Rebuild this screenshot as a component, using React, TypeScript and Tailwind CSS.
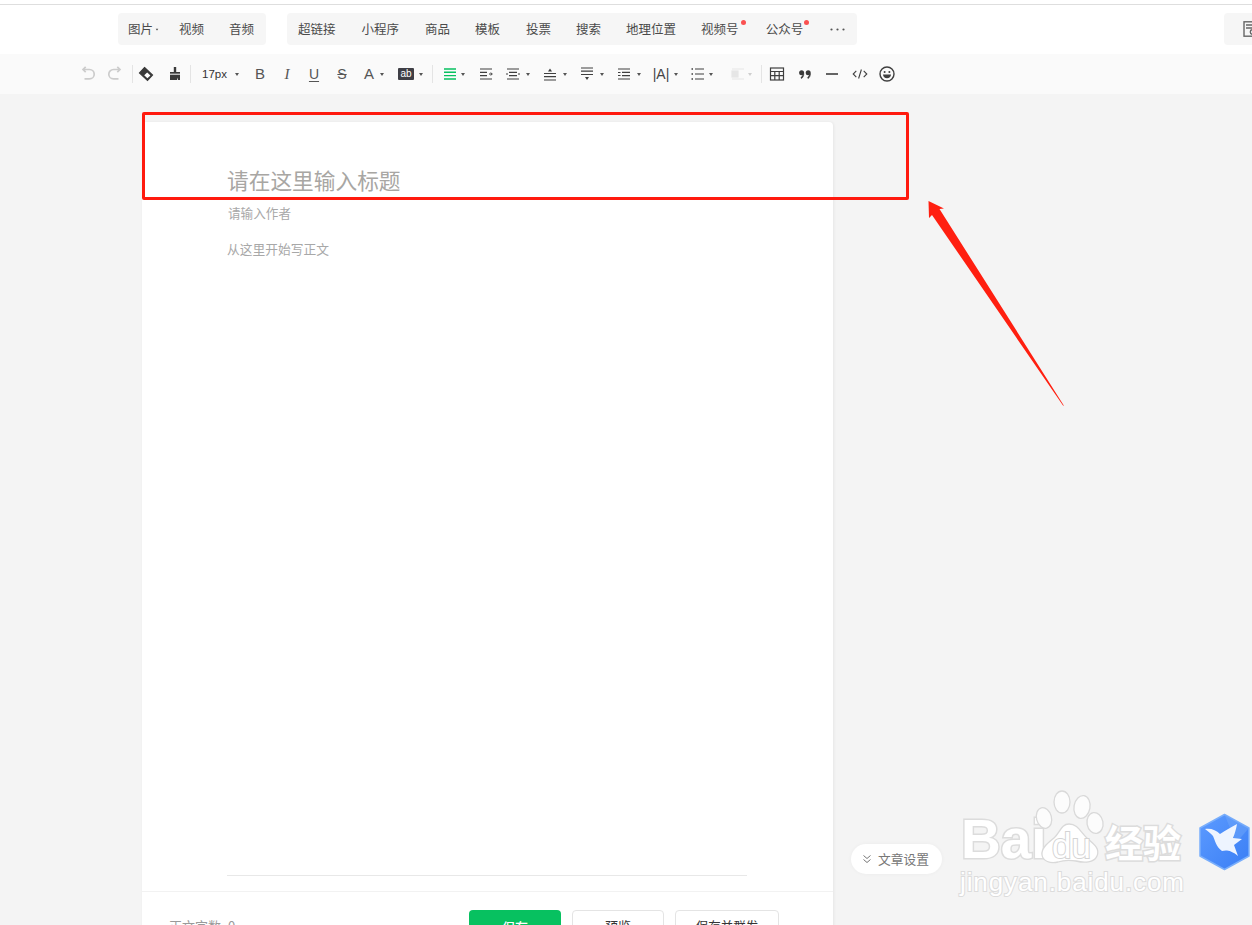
import React from "react";

const Caret = ({ className = "", light = false }: { className?: string; light?: boolean }) => (
  <svg viewBox="0 0 4 3" className={`w-[4px] h-[3px] shrink-0 ${className}`}>
    <path d="M0 0H4L2 3Z" fill={light ? "#cfcfcf" : "#555"} />
  </svg>
);

const Sep = ({ className = "" }: { className?: string }) => (
  <div className={`w-px h-[18px] bg-[#e4e4e4] shrink-0 ${className}`} />
);

const Ic = ({ className = "", children }: { className?: string; children: React.ReactNode }) => (
  <svg viewBox="0 0 16 16" fill="none" stroke="#3f3f3f" strokeWidth="1.2" className={`w-4 h-4 shrink-0 ${className}`}>
    {children}
  </svg>
);

const Glyph = ({ className = "", children }: { className?: string; children: React.ReactNode }) => (
  <span className={`w-4 h-4 shrink-0 flex items-center justify-center text-[14px] leading-4 text-[#555] ${className}`}>{children}</span>
);

const NavItem = ({ className = "", children }: { className?: string; children: React.ReactNode }) => (
  <span className={`relative text-[12.5px] leading-[32px] text-[#4a4a4a] whitespace-nowrap ${className}`}>{children}</span>
);

const Dot = ({ className = "" }: { className?: string }) => (
  <span className={`absolute top-[7px] w-[5px] h-[5px] rounded-full bg-[#fa5151] ${className}`} />
);

export default function App() {
  return (
    <div className="relative w-[1252px] h-[925px] overflow-hidden bg-[#f4f4f4] font-['Noto_Sans_CJK_SC','Liberation_Sans',sans-serif]">
      <div className="h-[5px] bg-white border-b border-[#dedede]" />

      <nav className="h-[49px] bg-white flex items-start pt-2 pl-[118px]">
        <div className="w-[148px] h-8 bg-[#f6f6f6] rounded-sm flex items-center pl-[10px]">
          <NavItem>图片</NavItem>
          <Caret className="ml-[2px] scale-75" />
          <NavItem className="ml-[20px]">视频</NavItem>
          <NavItem className="ml-[25px]">音频</NavItem>
        </div>
        <div className="ml-[21px] w-[570px] h-8 bg-[#f6f6f6] rounded-sm flex items-center pl-[11px]">
          <NavItem>超链接</NavItem>
          <NavItem className="ml-[26px]">小程序</NavItem>
          <NavItem className="ml-[26px]">商品</NavItem>
          <NavItem className="ml-[25px]">模板</NavItem>
          <NavItem className="ml-[26px]">投票</NavItem>
          <NavItem className="ml-[25px]">搜索</NavItem>
          <NavItem className="ml-[25px]">地理位置</NavItem>
          <NavItem className="ml-[25px]">
            视频号
            <Dot className="right-[-7px]" />
          </NavItem>
          <NavItem className="ml-[27px]">
            公众号
            <Dot className="right-[-6px]" />
          </NavItem>
          <svg viewBox="0 0 15 3" className="w-[15px] h-[3px] ml-[27px]">
            <circle cx="1.5" cy="1.5" r="1.1" fill="#555" />
            <circle cx="7.5" cy="1.5" r="1.1" fill="#555" />
            <circle cx="13.5" cy="1.5" r="1.1" fill="#555" />
          </svg>
        </div>
        <div className="ml-auto w-[28px] h-8 bg-[#f6f6f6] rounded-l-sm flex items-center pl-[19px] overflow-hidden">
          <svg viewBox="0 0 16 16" fill="none" stroke="#666" strokeWidth="1.4" className="w-4 h-4 shrink-0">
            <rect x="1" y="0.8" width="13" height="14.4" />
            <path d="M3 4H12M3 7H9" />
            <circle cx="9.5" cy="11" r="2.2" />
          </svg>
        </div>
      </nav>

      <div className="h-10 bg-[#fafafa] flex items-center pl-[80px]">
        <Ic className="[&_*]:stroke-[#cccccc]">
          <path d="M3 3.5H9.5a4.7 4.7 0 0 1 0 9.4H4.5M5.7 0.8L3 3.5L5.7 6.2" strokeWidth="1.7" />
        </Ic>
        <Ic className="ml-[11px] [&_*]:stroke-[#cccccc]">
          <path d="M13 3.5H6.5a4.7 4.7 0 0 0 0 9.4h5M10.3 0.8L13 3.5L10.3 6.2" strokeWidth="1.7" />
        </Ic>
        <Sep className="ml-[9px]" />
        <Ic className="ml-[5px]">
          <path d="M6.5 1.5L14.5 9L9.5 14.5L1.5 7Z" fill="#3a3a3a" stroke="#3a3a3a" />
          <path d="M6.2 9.2L9.2 6.6L12.4 9.4L9.4 12.2Z" fill="#fff" stroke="none" />
        </Ic>
        <Ic className="ml-[13px]">
          <path d="M6.8 1H9.2V6H13V14H11V11.5L10 14H3V6H6.8Z" fill="#3a3a3a" stroke="none" />
          <path d="M3 8.2H13" stroke="#fafafa" strokeWidth="1" />
        </Ic>
        <Sep className="ml-[7px]" />
        <span className="ml-[11px] w-[26px] text-[11.5px] leading-4 text-[#333] font-['Liberation_Sans',sans-serif] whitespace-nowrap">17px</span>
        <Caret className="ml-[7px]" />
        <Glyph className="ml-[13px] font-['Liberation_Sans',sans-serif] text-[15px]">B</Glyph>
        <Glyph className="ml-[11px] font-['Liberation_Serif',serif] italic text-[15px]">I</Glyph>
        <Glyph className="ml-[11px] font-['Liberation_Sans',sans-serif] underline underline-offset-2">U</Glyph>
        <Glyph className="ml-[12px] font-['Liberation_Sans',sans-serif] line-through">S</Glyph>
        <Glyph className="ml-[11px] font-['Liberation_Sans',sans-serif] text-[15px]">A</Glyph>
        <Caret className="ml-[3px]" />
        <span className="ml-[14px] w-4 h-[12px] bg-[#3f3f46] rounded-[1px] text-white text-[10px] leading-[12px] text-center font-['Liberation_Sans',sans-serif]">ab</span>
        <Caret className="ml-[5px]" />
        <Sep className="ml-[9px]" />
        <Ic className="ml-[9px] [&_*]:stroke-[#07c160]">
          <path d="M2 3H14M2 6.3H14M2 9.6H14M2 13H14" strokeWidth="1.4" />
        </Ic>
        <Caret className="ml-[3px]" />
        <Ic className="ml-[13px]">
          <path d="M2 3H14M2 6.3H9M2 9.6H9M2 13H14" />
          <path d="M11 8H14M12.8 6.5L14.3 8L12.8 9.5" strokeWidth="1" />
        </Ic>
        <Ic className="ml-[11px]">
          <path d="M2 3H14M4 6.3H12M4 9.6H12M2 13H14" />
          <path d="M1 8H3M13 8H15" strokeWidth="1" />
        </Ic>
        <Caret className="ml-[5px]" />
        <Ic className="ml-[12px]">
          <path d="M2 7.5H14M2 10.7H14M2 14H14" />
          <path d="M8 2.5L10 5.5H6Z" fill="#3f3f3f" stroke="none" />
        </Ic>
        <Caret className="ml-[5px]" />
        <Ic className="ml-[12px]">
          <path d="M2 2H14M2 5.2H14M2 8.5H14" />
          <path d="M8 14L6 11H10Z" fill="#3f3f3f" stroke="none" />
        </Ic>
        <Caret className="ml-[5px]" />
        <Ic className="ml-[12px]">
          <path d="M2 3H14M6 6.3H14M6 9.6H14M2 13H14" />
          <path d="M2 6.5H4.5M2 9.5H4.5" strokeWidth="1" />
        </Ic>
        <Caret className="ml-[5px]" />
        <span className="ml-[12px] w-4 h-4 shrink-0 flex items-center justify-center text-[14px] leading-4 text-[#444] font-['Liberation_Sans',sans-serif] whitespace-nowrap">|A|</span>
        <Caret className="ml-[5px]" />
        <Ic className="ml-[12px]">
          <path d="M5 3H14M5 8H14M5 13H14" />
          <path d="M1.5 3H3M1.5 8H3M1.5 13H3" strokeWidth="1.6" />
        </Ic>
        <Caret className="ml-[3px]" />
        <Ic className="ml-[17px] [&_*]:stroke-[#e6e6e6]">
          <path d="M2 3H14M2 13H14" />
          <rect x="2" y="5" width="6" height="6" fill="#e6e6e6" />
        </Ic>
        <Caret light className="ml-[2px]" />
        <Sep className="ml-[9px]" />
        <Ic className="ml-[7px]">
          <rect x="1.5" y="2" width="13" height="12" />
          <path d="M1.5 5.5H14.5M1.5 9.7H14.5M5.8 5.5V14M10.2 5.5V14" />
        </Ic>
        <Ic className="ml-[12px]">
          <circle cx="4.6" cy="6.8" r="2.5" fill="#3a3a3a" stroke="none" />
          <circle cx="11.2" cy="6.8" r="2.5" fill="#3a3a3a" stroke="none" />
          <path d="M6.8 7.5C6.8 10 6 11.6 4.4 12.5L3.8 11.6M13.4 7.5C13.4 10 12.6 11.6 11 12.5L10.4 11.6" fill="#3a3a3a" stroke="#3a3a3a" strokeWidth="0.6" />
        </Ic>
        <Ic className="ml-[11px]">
          <path d="M2 8H14" strokeWidth="1.6" />
        </Ic>
        <Ic className="ml-[12px]">
          <path d="M4.3 4.8L1.2 8L4.3 11.2M11.7 4.8L14.8 8L11.7 11.2M9.4 3.5L6.6 12.5" strokeWidth="1.1" />
        </Ic>
        <Ic className="ml-[11px]">
          <circle cx="8" cy="8" r="7" strokeWidth="1.4" />
          <circle cx="5.6" cy="6" r="1" fill="#3f3f3f" stroke="none" />
          <circle cx="10.4" cy="6" r="1" fill="#3f3f3f" stroke="none" />
          <path d="M4 8.6H12C12 11 10.2 12.3 8 12.3S4 11 4 8.6Z" fill="#3f3f3f" stroke="none" />
        </Ic>
      </div>

      <main className="ml-[142px] mt-[28px] w-[691px] h-[831px] bg-white rounded-t-sm shadow-[1px_0_3px_rgba(0,0,0,0.06)] flex flex-col">
        <div className="h-[769px] pl-[85px] pt-[43px] flex flex-col">
          <h1 className="text-[21.7px] leading-[30px] font-normal text-[#a8a6a3] whitespace-nowrap">请在这里输入标题</h1>
          <p className="mt-[8px] pl-px text-[12.6px] leading-5 text-[#a8a8a8]">请输入作者</p>
          <p className="mt-[16px] text-[12.75px] leading-5 text-[#a8a8a8]">从这里开始写正文</p>
          <div className="mt-auto mb-[15px] w-[520px] h-px bg-[#e8e8e8]" />
        </div>
        <footer className="border-t border-[#f2f2f2] flex items-start pl-[27px] pt-[18px]">
          <span className="mt-[6px] w-[300px] text-[13px] leading-5 text-[#9a9a9a] whitespace-nowrap">正文字数<span className="ml-[7px]">0</span></span>
          <button className="w-[92px] h-[32px] bg-[#07c160] rounded-sm text-white text-[13px] leading-[32px] text-center font-medium pt-[1px]">保存</button>
          <button className="ml-[11px] w-[92px] h-[32px] bg-white border border-[#e4e4e4] rounded-sm text-[#353535] text-[13px] text-center">预览</button>
          <button className="ml-[11px] w-[104px] h-[32px] bg-white border border-[#e4e4e4] rounded-sm text-[#353535] text-[12.5px] text-center whitespace-nowrap">保存并群发</button>
        </footer>
      </main>

      {/* floating settings pill */}
      <div className="absolute left-[851px] top-[844px] w-[91px] h-[30px] bg-white rounded-full shadow-[0_0_4px_rgba(0,0,0,0.04)] flex items-center pl-[11px]">
        <svg viewBox="0 0 10 10" fill="none" stroke="#777" strokeWidth="1" className="w-[10px] h-[10px]">
          <path d="M1.5 1.5L5 4.5L8.5 1.5M1.5 5.5L5 8.5L8.5 5.5" />
        </svg>
        <span className="ml-[6px] text-[12.75px] leading-5 text-[#777] whitespace-nowrap">文章设置</span>
      </div>

      {/* annotation */}
      <div className="absolute left-[142px] top-[112px] w-[767px] h-[88px] border-[3px] border-[#ff1a0e] rounded-[2px]" />
      <svg className="absolute left-[920px] top-[195px] w-[150px] h-[215px]" viewBox="0 0 150 215">
        <path d="M8.5 6L24 13.5L19.5 14L143.8 210.5L143.2 210.8L12 20L9 23Z" fill="#ff1f10" />
      </svg>

      {/* watermark */}
      <span className="absolute left-[961px] top-[804px] text-[55px] leading-[70px] font-bold text-white font-['Liberation_Sans',sans-serif] [-webkit-text-stroke:3px_#dcdcdc] [paint-order:stroke_fill]">Bai</span>
      <svg className="absolute left-[1034px] top-[788px] w-[72px] h-[78px]" viewBox="0 0 72 78">
        <g fill="#fcfcfc" stroke="#d9d9d9" strokeWidth="1.3">
          <ellipse cx="10" cy="30" rx="7.5" ry="10.5" transform="rotate(-15 10 30)" />
          <ellipse cx="28" cy="14" rx="8" ry="11" />
          <ellipse cx="48" cy="19" rx="8" ry="11.5" transform="rotate(10 48 19)" />
          <ellipse cx="61" cy="35" rx="8" ry="10.5" transform="rotate(-10 61 35)" />
          <path d="M35 36C44 36 47 45 54 51C61 57 66 61 63 68C60 75 50 75 42 73C36 72 30 72 24 74C16 76 9 73 8 67C7 60 14 55 20 50C26 45 27 36 35 36Z" fill="#fff" />
        </g>
      </svg>
      <span className="absolute left-[1052px] top-[826px] text-[35px] leading-10 text-white font-['Liberation_Sans',sans-serif] [-webkit-text-stroke:2px_#d4d4d4] [paint-order:stroke_fill]">du</span>
      <span className="absolute left-[1105px] top-[816px] text-[38px] leading-[50px] font-bold text-white [-webkit-text-stroke:3px_#dcdcdc] [paint-order:stroke_fill] whitespace-nowrap">经验</span>
      <span className="absolute left-[960px] top-[866px] text-[26px] leading-[32px] tracking-[0.9px] text-white font-['Liberation_Sans',sans-serif] [-webkit-text-stroke:2px_#dcdcdc] [paint-order:stroke_fill] whitespace-nowrap">jingyan.baidu.com</span>

      <svg className="absolute left-[1198px] top-[813px] w-[53px] h-[58px]" viewBox="0 0 53 58">
        <defs>
          <linearGradient id="hexBlue" x1="0" y1="0" x2="1" y2="1">
            <stop offset="0" stopColor="#5c9bff" />
            <stop offset="1" stopColor="#3a7ef5" />
          </linearGradient>
        </defs>
        <path d="M26.5 1.5L51 15V43L26.5 56.5L2 43V15Z" fill="url(#hexBlue)" stroke="#79aefb" strokeWidth="1.5" strokeLinejoin="round" />
        <path d="M26.5 1.5L51 15L38 30Z" fill="#6da6fa" opacity="0.5" />
        <path d="M7 16C13 15 18 17 22 21C27 18 33 14 39 11C38 17 36 23 35 25L44 26L36 32L40 43C33 37 28 37 24 38C18 34 17 27 15 23C13 21 10 18 7 16Z" fill="#eef4ff" />
      </svg>
    </div>
  );
}
